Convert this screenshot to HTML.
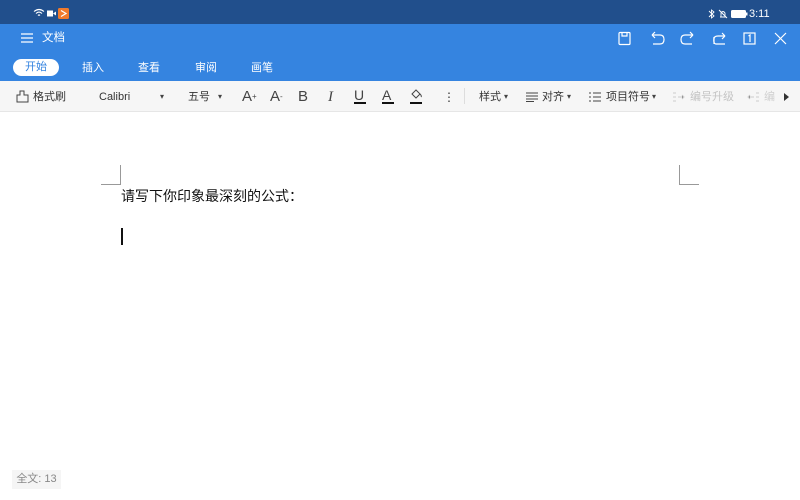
<!DOCTYPE html>
<html><head><meta charset="utf-8"><style>
*{margin:0;padding:0;box-sizing:border-box}
body{width:800px;height:500px;overflow:hidden;background:#fff;font-family:"Liberation Sans","Noto Sans CJK SC",sans-serif;position:relative}
.abs{position:absolute;line-height:14px;white-space:nowrap}
.sb{left:0;top:0;width:800px;height:24px;background:#214f8c}
.hd{left:0;top:24px;width:800px;height:57px;background:#3584e0}
.tb{left:0;top:81px;width:800px;height:31px;background:#f6f6f6;border-bottom:1px solid #e6e6e6}
.w{color:#fff;font-size:11px}
.t{color:#333;font-size:11px}
.dd{color:#444;font-size:8px}
svg{position:absolute}
</style></head><body>
<div class="abs sb"></div>
<div class="abs hd"></div>
<div class="abs tb"></div>
<svg style="left:33px;top:8px" width="36" height="11"><path d="M1 3.5 Q6 -0.5 11 3.5 M3 5.5 Q6 2.5 9 5.5 M5 7.5 Q6 6.5 7 7.5" stroke="#fff" fill="none" stroke-width="1.1"/><rect x="14" y="2.5" width="6" height="6" fill="#fff"/><path d="M20 5.5 L23 3.5 L23 7.5Z" fill="#fff"/><rect x="25" y="0" width="11" height="11" rx="1.5" fill="#f07a2c"/><path d="M28 2.5 L33 5.5 L28 8.5" stroke="#fff" fill="none" stroke-width="1.2"/></svg>
<svg style="left:708px;top:9px" width="42" height="10"><path d="M1 2 L6 7 L3.5 9 L3.5 1 L6 3 L1 8" stroke="#fff" fill="none" stroke-width="0.9"/><path d="M13 8 L13 4 Q15 1 17 4 L17 8 M12 8 L18 8 M11 1 L19 9" stroke="#fff" fill="none" stroke-width="0.9"/><rect x="23.5" y="1.5" width="14" height="7" rx="1" stroke="#fff" fill="#fff"/><rect x="38" y="3.5" width="1.5" height="3" fill="#fff"/></svg>
<div class="abs w" style="left:749px;top:7px;font-size:11px">3:11</div>
<svg style="left:21px;top:32px" width="12" height="12"><path d="M0 2H12M0 6H12M0 10H12" stroke="#fff" stroke-width="1.2"/></svg>
<div class="abs w" style="left:42px;top:31px;font-size:11.5px">文档</div>
<svg style="left:617px;top:31px" width="170" height="16" fill="none" stroke="#fff" stroke-width="1.2">
<rect x="2" y="1.5" width="11" height="12" rx="1"/><path d="M5 1.5V5H10V1.5"/>
<path d="M35 4H43Q47 4 47 8.5Q47 13 43 13H36M35 4L38 1M35 4L38 7"/>
<path d="M76 4H68Q64 4 64 8.5Q64 13 68 13H75M76 4L73 1M76 4L73 7"/>
<path d="M97 6Q96 13 99 13H108M97 13V8Q97 5 101 5H108M108 5L105 2M108 5L105 8"/>
<rect x="127" y="2" width="11" height="11"/><path d="M131.5 5L133 4V11"/>
<path d="M158 2L169 13M169 2L158 13"/>
</svg>
<div class="abs" style="left:13px;top:59px;width:46px;height:17px;border-radius:9px;background:#fff;color:#3584e0;font-size:11px;text-align:center;line-height:17px">开始</div>
<div class="abs w" style="left:82px;top:61px">插入</div>
<div class="abs w" style="left:138px;top:61px">查看</div>
<div class="abs w" style="left:195px;top:61px">审阅</div>
<div class="abs w" style="left:251px;top:61px">画笔</div>
<svg style="left:16px;top:90px" width="14" height="14" fill="none" stroke="#444" stroke-width="1"><path d="M1 12V5H4V1H8V5H12V12Z"/></svg>
<div class="abs t" style="left:33px;top:90px">格式刷</div>
<div class="abs t" style="left:99px;top:90px">Calibri</div>
<div class="abs dd" style="left:160px;top:90px">▾</div>
<div class="abs t" style="left:188px;top:90px">五号</div>
<div class="abs dd" style="left:218px;top:90px">▾</div>
<div class="abs" style="left:242px;top:89px;font-size:15px;line-height:16px;color:#444">A<span style="font-size:8px;vertical-align:top">+</span></div>
<div class="abs" style="left:270px;top:89px;font-size:15px;line-height:16px;color:#444">A<span style="font-size:8px;vertical-align:top">-</span></div>
<div class="abs" style="left:298px;top:89px;font-size:15px;line-height:16px;color:#444">B</div>
<div class="abs" style="left:328px;top:89px;font-size:15px;line-height:16px;color:#444;font-style:italic;font-family:'Liberation Serif',serif">I</div>
<div class="abs" style="left:354px;top:88px;font-size:14px;color:#444">U</div>
<div class="abs" style="left:354px;top:102px;width:12px;height:2px;background:#111"></div>
<div class="abs" style="left:382px;top:88px;font-size:14px;color:#444">A</div>
<div class="abs" style="left:382px;top:102px;width:12px;height:2px;background:#111"></div>
<svg style="left:410px;top:88px" width="14" height="12" fill="none" stroke="#444" stroke-width="1"><path d="M2 6L6 2L10 6L6 10Z M10 6Q12 8 11 9"/></svg>
<div class="abs" style="left:410px;top:102px;width:12px;height:2px;background:#111"></div>
<div class="abs t" style="left:443px;top:90px;font-size:12px">⋮</div>
<div class="abs" style="left:464px;top:88px;width:1px;height:16px;background:#ddd"></div>
<div class="abs t" style="left:479px;top:90px">样式</div>
<div class="abs dd" style="left:504px;top:90px">▾</div>
<svg style="left:526px;top:92px" width="12" height="10" stroke="#444" stroke-width="1"><path d="M0 1H12M0 4H12M0 7H12M0 9.5H8"/></svg>
<div class="abs t" style="left:542px;top:90px">对齐</div>
<div class="abs dd" style="left:567px;top:90px">▾</div>
<svg style="left:589px;top:92px" width="12" height="10" stroke="#444" stroke-width="1"><path d="M0 1H2M4 1H12M0 5H2M4 5H12M0 9H2M4 9H12"/></svg>
<div class="abs t" style="left:606px;top:90px">项目符号</div>
<div class="abs dd" style="left:652px;top:90px">▾</div>
<svg style="left:673px;top:92px" width="12" height="10" stroke="#ccc" stroke-width="1"><path d="M0 1H3M0 5H3M0 9H3M5 5H11M9 3L11 5L9 7"/></svg>
<div class="abs" style="left:690px;top:90px;font-size:11px;color:#c4c4c4">编号升级</div>
<svg style="left:747px;top:92px" width="12" height="10" stroke="#ccc" stroke-width="1"><path d="M9 1H12M9 5H12M9 9H12M1 5H7M3 3L1 5L3 7"/></svg>
<div class="abs" style="left:764px;top:90px;font-size:11px;color:#d0d0d0">编</div>
<div class="abs" style="left:776px;top:81px;width:24px;height:30px;background:#f6f6f6"></div>
<svg style="left:784px;top:93px" width="6" height="8"><path d="M0 0L5 4L0 8Z" fill="#333"/></svg>
<div class="abs" style="left:120px;top:165px;width:1px;height:20px;background:#999"></div>
<div class="abs" style="left:101px;top:184px;width:20px;height:1px;background:#999"></div>
<div class="abs" style="left:679px;top:165px;width:1px;height:20px;background:#999"></div>
<div class="abs" style="left:679px;top:184px;width:20px;height:1px;background:#999"></div>
<div class="abs" style="left:121px;top:187px;font-size:14px;line-height:18px;color:#111">请写下你印象最深刻的公式：</div>
<div class="abs" style="left:121px;top:228px;width:2px;height:17px;background:#111"></div>
<div class="abs" style="left:12px;top:470px;width:49px;height:19px;background:#f5f5f5;color:#888;font-size:11px;line-height:19px;text-align:center">全文: 13</div>
</body></html>
